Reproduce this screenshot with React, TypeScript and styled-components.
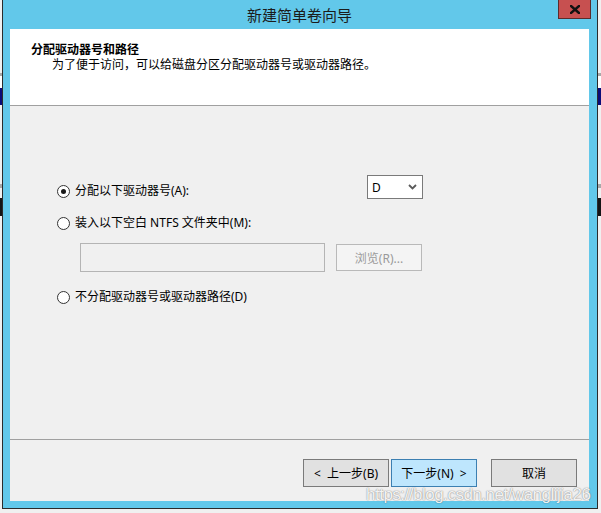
import styled, { createGlobalStyle } from 'styled-components';

const GlobalStyle = createGlobalStyle`
  html, body {
    margin: 0;
    padding: 0;
  }
  body {
    background: linear-gradient(
      to bottom,
      #f0f0f0 0 73px,
      #a8a8a8 73px 76px,
      #ffffff 76px 88px,
      #0b0b78 88px 105px,
      #f0f0f0 105px 184px,
      #a8a8a8 184px 188px,
      #f0f0f0 188px 198px,
      #141414 198px 216px,
      #f0f0f0 216px
    );
    font-family: "Noto Sans", "Noto Sans CJK SC", sans-serif;
  }
  * {
    box-sizing: border-box;
  }
`;

const Page = styled.div`
  position: relative;
  width: 601px;
  height: 513px;
  padding-left: 2px;
`;

const Window = styled.div`
  width: 596px;
  height: 509px;
  display: flex;
  flex-direction: column;
  background: #62c8ea;
  border: 1px solid #2b2b2b;
  border-top: none;
  padding: 0 8px 7px 7px;
`;

const TitleBar = styled.div`
  height: 29px;
  flex-shrink: 0;
  display: grid;
  grid-template-columns: 1fr auto 1fr;
  align-items: start;
`;

const TitleText = styled.div`
  grid-column: 2;
  align-self: center;
  font-size: 15px;
  line-height: 20px;
  color: #1b1b1b;
  font-family: "Noto Sans CJK SC", sans-serif;
`;

const CloseButton = styled.div`
  grid-column: 3;
  justify-self: end;
  margin-right: -2px;
  width: 33px;
  height: 19px;
  background: #c75050;
  border: 1px solid #5c2b2b;
  border-top: none;
  display: flex;
  align-items: center;
  justify-content: center;
`;

const Client = styled.div`
  flex: 1;
  display: flex;
  flex-direction: column;
  background: #f0f0f0;
`;

const Header = styled.div`
  height: 77px;
  flex-shrink: 0;
  background: #ffffff;
  border-bottom: 1px solid #a0a0a0;
  padding: 12px 0 0 21px;
  font-family: "Noto Sans CJK SC", sans-serif;
  font-size: 12px;
  color: #000;
`;

const HeaderTitle = styled.div`
  font-weight: 700;
  line-height: 15px;
`;

const HeaderSub = styled.div`
  line-height: 15px;
  padding-left: 21px;
`;

const Body = styled.div`
  flex: 1;
  display: flex;
  flex-direction: column;
  padding: 69px 166px 0 47px;
  border-bottom: 1px solid #a0a0a0;
`;

const DriveRow = styled.div`
  display: flex;
  justify-content: space-between;
  align-items: flex-start;
  height: 24px;
`;

const Option = styled.label<{ $top?: number }>`
  display: flex;
  align-items: center;
  gap: 5px;
  margin-top: ${(p) => p.$top ?? 0}px;
  height: 16px;
  font-size: 12px;
  line-height: 16px;
  color: #000;
`;

const Radio = styled.span<{ $checked?: boolean }>`
  width: 13px;
  height: 13px;
  border-radius: 50%;
  border: 1px solid #333;
  background: #fff;
  display: flex;
  align-items: center;
  justify-content: center;

  &::after {
    content: '';
    width: 5px;
    height: 5px;
    border-radius: 50%;
    background: ${(p) => (p.$checked ? '#1a1a1a' : 'transparent')};
  }
`;

const Select = styled.div`
  width: 56px;
  height: 24px;
  background: #fff;
  border: 1px solid #7a7a7a;
  display: flex;
  align-items: center;
  justify-content: space-between;
  padding: 0 5px 0 4px;
  font-size: 12px;
  color: #000;
`;

const PathRow = styled.div`
  display: flex;
  align-items: center;
  margin-top: 12px;
  padding-left: 23px;
  height: 29px;
`;

const PathInput = styled.div`
  width: 245px;
  height: 29px;
  background: #f0f0f0;
  border: 1px solid #b4b4b4;
`;

const Button = styled.div<{ $default?: boolean; $disabled?: boolean }>`
  width: 86px;
  height: 28px;
  display: flex;
  align-items: center;
  justify-content: center;
  font-size: 12px;
  color: ${(p) => (p.$disabled ? '#9a9a9a' : '#000')};
  background: ${(p) => (p.$default ? '#bee6fd' : p.$disabled ? '#f4f4f4' : '#e1e1e1')};
  border: 1px solid
    ${(p) => (p.$default ? '#3c7fb1' : p.$disabled ? '#b9b9b9' : '#7a7a7a')};
  white-space: pre;
`;

const BrowseButton = styled(Button)`
  height: 27px;
  margin-left: 11px;
`;

const Footer = styled.div`
  height: 61px;
  flex-shrink: 0;
  display: flex;
  justify-content: flex-end;
  align-items: flex-start;
  padding: 19px 12px 0 0;
  gap: 2px;
`;

const CancelButton = styled(Button)`
  margin-left: 12px;
`;

const Watermark = styled.div`
  position: absolute;
  left: 366px;
  top: 485px;
  font-family: "Liberation Sans", Arial, sans-serif;
  font-size: 17px;
  line-height: 20px;
  letter-spacing: -0.5px;
  color: rgba(255, 255, 255, 0.92);
  text-shadow:
    0 0 1px rgba(0, 0, 0, 0.45),
    0 0 2px rgba(0, 0, 0, 0.2);
  white-space: nowrap;
`;

const App = () => {
  return (
    <>
      <GlobalStyle />
      <Page>
        <Window>
          <TitleBar>
            <TitleText>新建简单卷向导</TitleText>
            <CloseButton>
              <svg width="10" height="9" viewBox="0 0 10 9">
                <path d="M1 1 L9 8 M9 1 L1 8" stroke="#111" strokeWidth="2.4" strokeLinecap="square" />
              </svg>
            </CloseButton>
          </TitleBar>
          <Client>
            <Header>
              <HeaderTitle>分配驱动器号和路径</HeaderTitle>
              <HeaderSub>为了便于访问，可以给磁盘分区分配驱动器号或驱动器路径。</HeaderSub>
            </Header>
            <Body>
              <DriveRow>
                <Option $top={8}>
                  <Radio $checked />
                  分配以下驱动器号(A):
                </Option>
                <Select>
                  <span>D</span>
                  <svg width="9" height="6" viewBox="0 0 9 6">
                    <path d="M1 1 L4.5 4.5 L8 1" stroke="#5a5a5a" strokeWidth="1.8" fill="none" />
                  </svg>
                </Select>
              </DriveRow>
              <Option $top={16}>
                <Radio />
                装入以下空白 NTFS 文件夹中(M):
              </Option>
              <PathRow>
                <PathInput />
                <BrowseButton $disabled>浏览(R)...</BrowseButton>
              </PathRow>
              <Option $top={17}>
                <Radio />
                不分配驱动器号或驱动器路径(D)
              </Option>
            </Body>
            <Footer>
              <Button>{'<  上一步(B)'}</Button>
              <Button $default>{'下一步(N)  >'}</Button>
              <CancelButton>取消</CancelButton>
            </Footer>
          </Client>
        </Window>
        <Watermark>https://blog.csdn.net/wanglijia26</Watermark>
      </Page>
    </>
  );
};

export default App;
